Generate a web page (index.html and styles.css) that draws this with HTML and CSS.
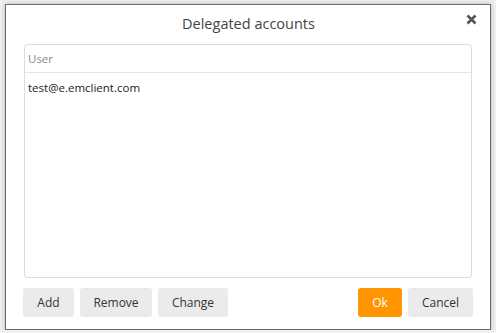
FILE: index.html
```html
<!DOCTYPE html>
<html lang="en">
<head>
    <meta charset="UTF-8">
    <title>Delegated accounts</title>
    <link rel="stylesheet" href="styles.css">
</head>
<body>
    <div class="dialog">
        <div class="dialog-header">
            <span class="dialog-title">Delegated accounts</span>
            <span class="close-btn">
                <svg width="11" height="11" viewBox="0 0 11 11">
                    <path d="M1.5 1.5 L9.5 9.5 M9.5 1.5 L1.5 9.5" stroke="#555" stroke-width="2.6" stroke-linecap="butt"/>
                </svg>
            </span>
        </div>

        <div class="list">
            <div class="list-head">User</div>
            <div class="list-row">test@e.emclient.com</div>
        </div>

        <div class="actions">
            <button class="btn">Add</button>
            <button class="btn btn-remove">Remove</button>
            <button class="btn btn-change">Change</button>
            <span class="spacer"></span>
            <button class="btn btn-ok">Ok</button>
            <button class="btn btn-cancel">Cancel</button>
        </div>
    </div>
</body>
</html>
```

FILE: styles.css
```css
/* Page */
body {
    margin: 0;
    background-color: #f1f1f1;
    font-family: 'Open Sans', 'Noto Sans', sans-serif;
    color: #333;
}

/* Dialog window */
.dialog {
    box-sizing: border-box;
    width: 486px;
    height: 326px;
    margin: 4px 0 0 5px;
    background-color: #fff;
    border: 1px solid #6b6b6b;
    box-shadow: 0 0 5px rgba(0, 0, 0, 0.25);
    display: flex;
    flex-direction: column;
    padding: 0 17px 12px 18px;
}

.dialog-header {
    position: relative;
    height: 39px;
    display: flex;
    align-items: center;
    justify-content: center;
    flex-shrink: 0;
}

.dialog-title {
    font-size: 14.5px;
    color: #444;
    margin-top: -3px;
}

.close-btn {
    position: absolute;
    right: -4px;
    top: 9px;
    display: flex;
}

/* User list */
.list {
    box-sizing: border-box;
    height: 234px;
    margin-right: 1px;
    border: 1px solid #dcdcdc;
    border-radius: 4px;
}

.list-head {
    height: 27px;
    line-height: 27px;
    padding-left: 3px;
    font-size: 11.5px;
    color: #8a8a8a;
    border-bottom: 1px solid #e4e4e4;
}

.list-row {
    padding: 7px 0 0 3px;
    font-size: 11.5px;
    color: #222;
}

/* Bottom buttons */
.actions {
    display: flex;
    gap: 6px;
    margin-top: 10px;
    margin-left: -1px;
}

.spacer {
    flex: 1;
}

.btn {
    height: 29px;
    border: none;
    border-radius: 3px;
    background-color: #ebebeb;
    font-family: inherit;
    font-size: 12px;
    color: #333;
    padding: 0;
    width: 51px;
}

.btn-remove {
    width: 72px;
}

.btn-change {
    width: 70px;
}

.btn-ok {
    width: 44px;
    background-color: #ff9500;
    color: #fff;
}

.btn-cancel {
    width: 65px;
}
```
